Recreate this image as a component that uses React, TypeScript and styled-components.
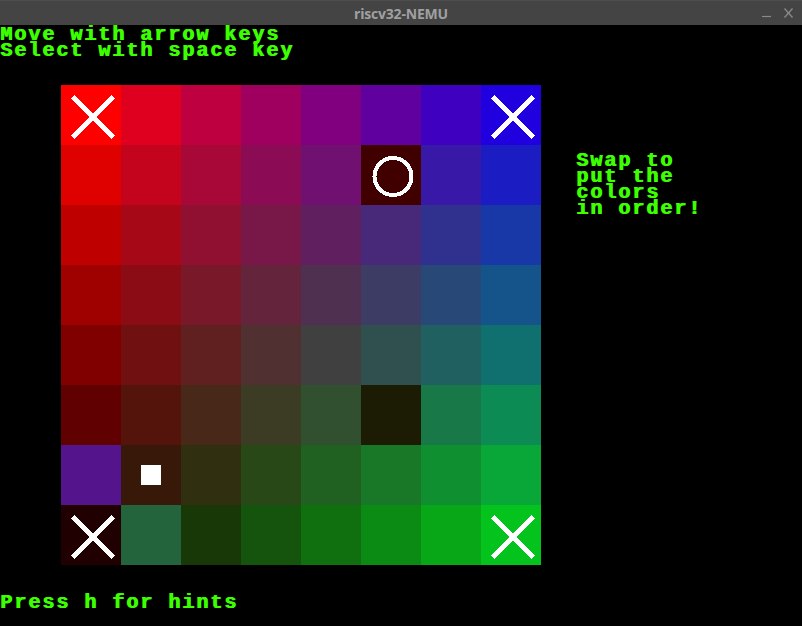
import React from "react";
import styled, { createGlobalStyle } from "styled-components";

const Global = createGlobalStyle`
  html, body { margin: 0; padding: 0; background: #000; }
  body { width: 802px; height: 626px; overflow: hidden; }
`;

const Window = styled.div`
  width: 802px;
  height: 626px;
  display: flex;
  flex-direction: column;
  background: #000;
`;

const TitleBar = styled.div`
  height: 25px;
  flex: none;
  background: #444444;
  border-top: 1px solid #4e4e4e;
  box-sizing: border-box;
  display: flex;
  align-items: center;
  justify-content: center;
  position: relative;
`;

const Title = styled.span`
  font-family: "Open Sans", "DejaVu Sans", sans-serif;
  font-weight: 700;
  font-size: 14px;
  color: #a0a0a0;
  letter-spacing: -0.2px;
`;

const Controls = styled.div`
  position: absolute;
  right: 9px;
  top: 0;
  height: 24px;
  display: flex;
  align-items: center;
  gap: 13px;
`;

const Canvas = styled.div`
  flex: 1;
  display: flex;
  flex-direction: column;
  background: #000;
`;

const PixelText = styled.div`
  font-family: "Liberation Mono", "DejaVu Sans Mono", monospace;
  font-weight: 700;
  font-size: 20px;
  letter-spacing: 2px;
  line-height: 16px;
  padding-top: 2px;
  color: #3cff00;
  text-shadow: 1px 0 0 #3cff00;
  white-space: pre;
`;

const Header = styled(PixelText)`
  padding-left: 0;
`;

const Middle = styled.div`
  display: flex;
  margin-top: 26px;
`;

const Board = styled.div`
  margin-left: 61px;
  display: grid;
  grid-template-columns: repeat(8, 60px);
  grid-template-rows: repeat(8, 60px);
`;

const Cell = styled.div<{ $bg: string }>`
  width: 60px;
  height: 60px;
  background: ${(p) => p.$bg};
  position: relative;
`;

const Mark = styled.svg`
  position: absolute;
  left: 0;
  top: 0;
  width: 60px;
  height: 60px;
  shape-rendering: crispEdges;
`;

const Side = styled(PixelText)`
  margin-left: 35px;
  margin-top: 66px;
`;

const Footer = styled(PixelText)`
  margin-top: 28px;
`;

function solved(r: number, c: number): string {
  const u = c / 8;
  const v = r / 8;
  const R = Math.round(255 * (1 - u) * (1 - v));
  const G = Math.round(255 * u * v);
  const B = Math.round(255 * u * (1 - v));
  return `rgb(${R},${G},${B})`;
}

// which solved position is displayed at each board position
const swaps: Record<string, [number, number]> = {
  "1,5": [6, 0],
  "6,0": [1, 5],
  "5,5": [7, 1],
  "7,1": [5, 5],
};

type MarkKind = "x" | "o" | "sq" | null;

function markAt(r: number, c: number): MarkKind {
  if ((r === 0 || r === 7) && (c === 0 || c === 7)) return "x";
  if (r === 1 && c === 5) return "o";
  if (r === 6 && c === 1) return "sq";
  return null;
}

const XMark = () => (
  <Mark viewBox="0 0 60 60">
    <line x1="13.5" y1="13.5" x2="50.5" y2="50.5" stroke="#fff" strokeWidth="4.5" strokeLinecap="square" />
    <line x1="50.5" y1="13.5" x2="13.5" y2="50.5" stroke="#fff" strokeWidth="4.5" strokeLinecap="square" />
  </Mark>
);

const OMark = () => (
  <Mark viewBox="0 0 60 60">
    <circle cx="32" cy="31.5" r="18.5" fill="none" stroke="#fff" strokeWidth="4" />
  </Mark>
);

const SqMark = () => (
  <Mark viewBox="0 0 60 60">
    <rect x="20" y="20" width="20" height="20" fill="#fff" />
  </Mark>
);

export default function App() {
  const cells: React.ReactNode[] = [];
  for (let r = 0; r < 8; r++) {
    for (let c = 0; c < 8; c++) {
      const src = swaps[`${r},${c}`] ?? [r, c];
      const m = markAt(r, c);
      cells.push(
        <Cell key={`${r}-${c}`} $bg={solved(src[0], src[1])}>
          {m === "x" && <XMark />}
          {m === "o" && <OMark />}
          {m === "sq" && <SqMark />}
        </Cell>
      );
    }
  }
  return (
    <>
      <Global />
      <Window>
        <TitleBar>
          <Title>riscv32-NEMU</Title>
          <Controls>
            <svg width="9" height="10" viewBox="0 0 9 10">
              <line x1="0" y1="8.5" x2="9" y2="8.5" stroke="#8a8a8a" strokeWidth="1.2" />
            </svg>
            <svg width="9" height="10" viewBox="0 0 9 10">
              <line x1="0.5" y1="0.5" x2="8.5" y2="9.5" stroke="#8a8a8a" strokeWidth="1.3" />
              <line x1="8.5" y1="0.5" x2="0.5" y2="9.5" stroke="#8a8a8a" strokeWidth="1.3" />
            </svg>
          </Controls>
        </TitleBar>
        <Canvas>
          <Header>{"Move with arrow keys\nSelect with space key"}</Header>
          <Middle>
            <Board>{cells}</Board>
            <Side>{"Swap to\nput the\ncolors\nin order!"}</Side>
          </Middle>
          <Footer>Press h for hints</Footer>
        </Canvas>
      </Window>
    </>
  );
}
